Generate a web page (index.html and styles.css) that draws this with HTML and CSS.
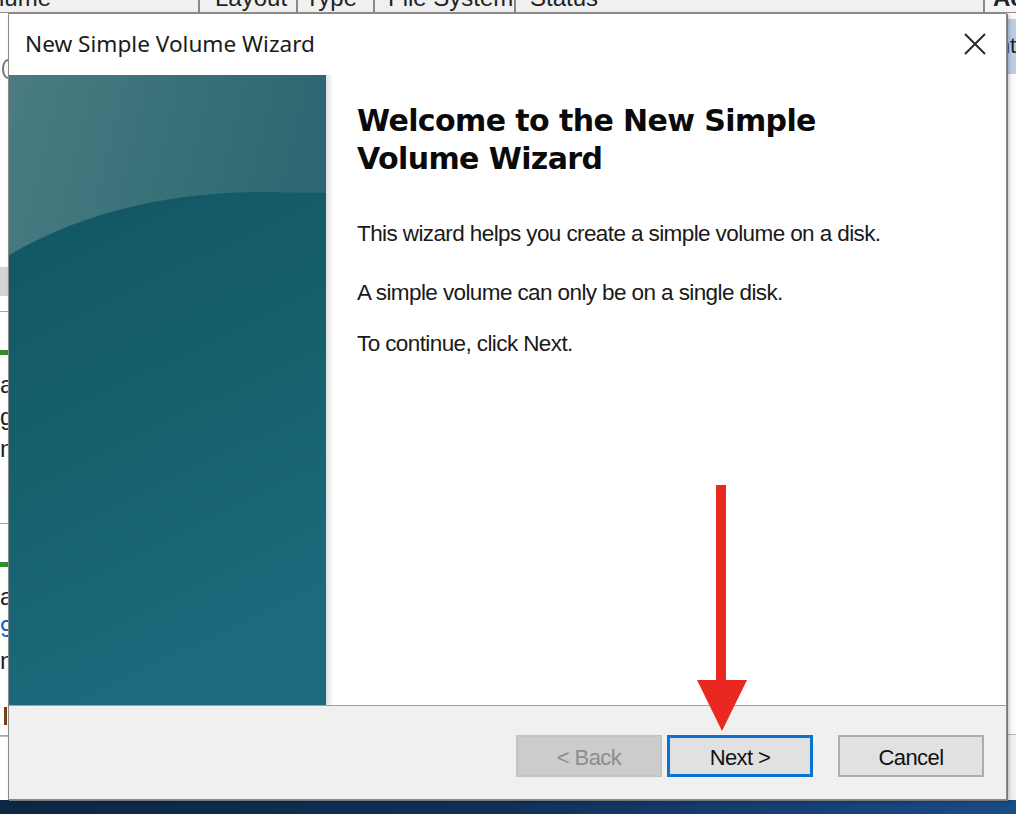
FILE: index.html
```html
<!DOCTYPE html>
<html>
<head>
<meta charset="utf-8">
<title>New Simple Volume Wizard</title>
<link rel="stylesheet" href="styles.css">
</head>
<body>
<div class="desktop">
  <div class="mmc">
    <div class="colhdr">
      <div class="col c-vol">Volume</div>
      <div class="col c-lay">Layout</div>
      <div class="col c-type">Type</div>
      <div class="col c-fs">File System</div>
      <div class="col c-stat">Status</div>
      <div class="col c-act">Actions</div>
    </div>
    <div class="mmc-body">
      <div class="disks">
        <div class="vol-list">
          <div class="vol-icon"></div>
        </div>
        <div class="splitter"></div>
        <div class="disk-row">
          <div class="part-bar"></div>
          <div class="disk-text">a:<br>g<br>n</div>
        </div>
        <div class="disk-row">
          <div class="part-bar"></div>
          <div class="disk-text">a:<br><span class="blue">9.</span><br>n</div>
          <div class="unalloc-mark"></div>
        </div>
        <div class="disk-foot"></div>
      </div>
      <div class="actions">
        <div class="act-item">Disk Management</div>
        <div class="act-fill"></div>
        <div class="act-foot"></div>
      </div>
    </div>
    <div class="taskbar"></div>
  </div>

  <div class="dialog">
    <div class="titlebar">
      <div class="title">New Simple Volume Wizard</div>
      <svg class="close" width="24" height="24" viewBox="0 0 24 24"><path d="M2 2 L22 22 M22 2 L2 22" stroke="#2b2b2b" stroke-width="2" fill="none"/></svg>
    </div>
    <div class="main">
      <div class="banner">
        <svg width="317" height="630" viewBox="0 0 317 630" preserveAspectRatio="none">
          <defs>
            <linearGradient id="gTop" x1="0" y1="0" x2="1" y2="0.5">
              <stop offset="0" stop-color="#4a7c82"/>
              <stop offset="0.6" stop-color="#336d75"/>
              <stop offset="1" stop-color="#286470"/>
            </linearGradient>
            <linearGradient id="gBot" x1="0" y1="0" x2="0.3" y2="1">
              <stop offset="0" stop-color="#125662"/>
              <stop offset="0.5" stop-color="#15606c"/>
              <stop offset="1" stop-color="#1c6a7c"/>
            </linearGradient>
          </defs>
          <rect x="0" y="0" width="317" height="630" fill="url(#gTop)"/>
          <path d="M0 180 C 70 140, 150 118, 250 117 L 317 118 L 317 630 L 0 630 Z" fill="url(#gBot)"/>
        </svg>
      </div>
      <div class="shade"></div>
      <div class="content">
        <h1 class="heading">Welcome to the New Simple Volume Wizard</h1>
        <p class="line l1">This wizard helps you create a simple volume on a disk.</p>
        <p class="line l2">A simple volume can only be on a single disk.</p>
        <p class="line l3">To continue, click Next.</p>
      </div>
    </div>
    <div class="sep"></div>
    <div class="footer">
      <button class="btn disabled">&lt; Back</button>
      <button class="btn primary">Next &gt;</button>
      <button class="btn cancel">Cancel</button>
    </div>
  </div>

  <svg class="arrow" width="50" height="246" viewBox="0 0 50 246">
    <rect x="19" y="0" width="10" height="200" fill="#e9281f"/>
    <polygon points="0,195 50,195 25,246" fill="#e9281f"/>
  </svg>
</div>
</body>
</html>
```

FILE: styles.css
```css
* { box-sizing: border-box; }
html, body { margin: 0; padding: 0; }
body {
  width: 1016px;
  height: 814px;
  overflow: hidden;
  background: #ffffff;
  font-family: "Liberation Sans", Arial, sans-serif;
}
.desktop {
  position: relative;
  width: 1016px;
  height: 814px;
  overflow: hidden;
}
.mmc {
  display: flex;
  flex-direction: column;
  height: 814px;
}
.colhdr {
  display: flex;
  height: 13px;
  background: #f0f0f0;
  border-bottom: 1px solid #8f8f8f;
  overflow: hidden;
  align-items: flex-end;
}
.col {
  flex: none;
  font-size: 24px;
  line-height: 20px;
  color: #222;
  white-space: nowrap;
  border-right: 2px solid #8a8a8a;
  height: 13px;
  display: flex;
  align-items: flex-end;
  padding-bottom: 4px;
  overflow: hidden;
}
.c-vol { width: 200px; text-indent: -29px; }
.c-lay { width: 98px; padding-left: 15px; }
.c-type { width: 77px; padding-left: 7px; }
.c-fs { width: 141px; padding-left: 13px; }
.c-stat { width: 469px; padding-left: 14px; }
.c-act { flex: 1; min-width: 0; padding-left: 8px; font-weight: bold; border-right: 0; background: #f5f5f5; }
.mmc-body {
  flex: 1;
  display: flex;
}
.disks {
  width: 990px;
  display: flex;
  flex-direction: column;
}
.vol-list {
  height: 254px;
  padding-top: 46px;
}
.vol-icon {
  width: 12px;
  height: 20px;
  border: 2px solid #777;
  border-radius: 50%;
  margin-left: 2px;
}
.splitter {
  height: 45px;
  background: linear-gradient(#d4d4d4 0 29px, #ffffff 29px 44px, #a8a8a8 44px);
}
.disk-row {
  position: relative;
  height: 212px;
  border-bottom: 1px solid #a8a8a8;
  padding-top: 38px;
}
.part-bar {
  height: 5px;
  width: 40px;
  background: #2f8f2f;
}
.disk-text {
  font-size: 24px;
  line-height: 32px;
  color: #222;
  padding-top: 14px;
}
.blue { color: #1a5fb4; }
.unalloc-mark {
  position: absolute;
  left: 4px;
  bottom: 10px;
  width: 3px;
  height: 18px;
  background: #7a3e1a;
}
.disk-foot {
  flex: 1;
  background: #ffffff;
  border-top: 1px solid #bdbdbd;
}
.actions {
  flex: 1;
  display: flex;
  flex-direction: column;
  padding-top: 6px;
  background: #fbfbfb;
}
.act-item {
  height: 55px;
  background: #bccee4;
  font-size: 22px;
  padding-left: 20px;
  padding-top: 14px;
  white-space: nowrap;
  overflow: hidden;
  color: #222;
}
.act-fill { flex: 1; }
.act-foot {
  height: 66px;
  border-top: 1px solid #b5b5b5;
  background: #f0f0f0;
}
.taskbar {
  height: 14px;
  background: linear-gradient(90deg, #0d2744 0%, #11315a 50%, #1a4c88 100%);
}

/* Dialog window */
.dialog {
  position: absolute;
  left: 8px;
  top: 13px;
  width: 999px;
  height: 787px;
  background: #ffffff;
  border: 1px solid #8a8a8a;
  box-shadow: 1px 1px 0 #7a7a7a, 2px 2px 4px rgba(0,0,0,0.25);
  display: flex;
  flex-direction: column;
}
.titlebar {
  height: 61px;
  display: flex;
  align-items: center;
  justify-content: space-between;
  padding: 0 19px 2px 16px;
}
.title {
  font-family: "Noto Sans", "Open Sans", sans-serif;
  font-size: 22.6px;
  color: #1b1b1b;
}
.close { display: block; margin-top: 1px; }
.main {
  height: 630px;
  display: flex;
}
.banner {
  width: 317px;
  flex: none;
}
.banner svg { display: block; }
.shade {
  width: 8px;
  flex: none;
  background: linear-gradient(90deg, #dedede, #f6f6f6 60%, #ffffff);
}
.content {
  flex: 1;
  padding: 27px 0 0 23px;
}
.heading {
  margin: 0 0 44px 0;
  width: 520px;
  font-family: "DejaVu Sans", Verdana, sans-serif;
  font-weight: bold;
  font-size: 30px;
  line-height: 38px;
  color: #0a0a0a;
  letter-spacing: -0.6px;
}
.line {
  margin: 0;
  font-family: "Liberation Sans", Arial, sans-serif;
  font-size: 22.5px;
  line-height: 24px;
  color: #1a1a1a;
  letter-spacing: -0.6px;
  white-space: nowrap;
}
.l1 { margin-bottom: 35px; }
.l2 { margin-bottom: 27px; }
.sep {
  height: 1px;
  background: #a0a0a0;
}
.footer {
  flex: 1;
  background: #f0f0f0;
  display: flex;
  align-items: flex-start;
  padding: 29px 22px 0 0;
  justify-content: flex-end;
}
.btn {
  width: 146px;
  height: 42px;
  font-family: "Liberation Sans", Arial, sans-serif;
  font-size: 22px;
  letter-spacing: -0.6px;
  color: #111;
  background: #e1e1e1;
  border: 2px solid #adadad;
  padding: 3px 0 0 0;
  margin: 0;
}
.disabled {
  background: #cccccc;
  border-color: #c4c4c4;
  color: #8d8d8d;
}
.primary {
  margin-left: 5px;
  border: 3px solid #0b74d1;
}
.cancel {
  margin-left: 25px;
}
.arrow {
  position: absolute;
  left: 697px;
  top: 485px;
}
```
